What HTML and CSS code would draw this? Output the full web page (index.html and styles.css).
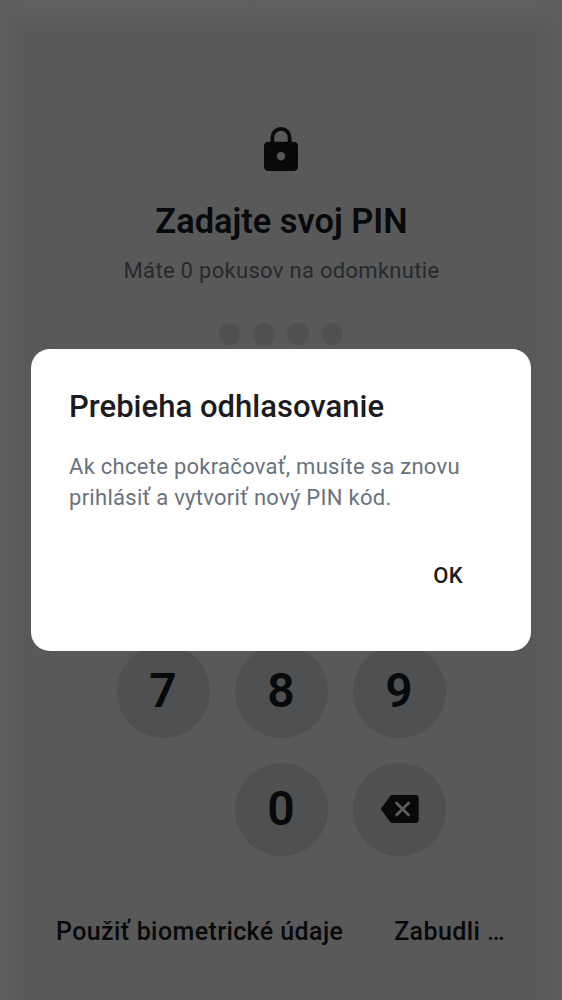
FILE: index.html
```html
<!DOCTYPE html>
<html lang="sk">
<head>
<meta charset="utf-8">
<title>PIN</title>
<link rel="stylesheet" href="styles.css">
</head>
<body>
<main class="screen">
  <header class="intro">
    <svg class="lock" viewBox="0 0 34 46" width="34" height="46">
      <path d="M8.400 18V11.400a8.600 8.600 0 0 1 17.200 0V18" fill="none" stroke="#08090b" stroke-width="3.800"/>
      <path fill="#08090b" fill-rule="evenodd" d="M4.200 15.700h25.600a4.200 4.200 0 0 1 4.200 4.200v20.800a4.200 4.200 0 0 1-4.200 4.200H4.200A4.200 4.200 0 0 1 0 40.700v-20.800a4.200 4.200 0 0 1 4.200-4.200zM17 26.100a4.200 4.200 0 1 0 0 8.400a4.200 4.200 0 1 0 0-8.400z"/>
    </svg>
    <h1 class="title">Zadajte svoj PIN</h1>
    <p class="attempts">Máte 0 pokusov na odomknutie</p>
    <div class="dots"><i class="dot"></i><i class="dot"></i><i class="dot"></i><i class="dot"></i></div>
  </header>
  <section class="keypad">
    <button class="key">7</button>
    <button class="key">8</button>
    <button class="key">9</button>
    <button class="key key-zero">0</button>
    <button class="key key-erase" aria-label="Vymazať">
      <svg class="erase" viewBox="0 0 38 28" width="38" height="28">
        <path fill="#08090b" d="M11.500 0H34.500a3.200 3.200 0 0 1 3.200 3.200V24.800a3.200 3.200 0 0 1-3.200 3.200H11.500a3 3 0 0 1-2.500-1.300L.5 15a1.800 1.800 0 0 1 0-2L9 1.300A3 3 0 0 1 11.500 0z"/>
        <path d="M14.800 7.200l13.600 13.600M28.400 7.200L14.800 20.800" stroke="#5a5b5d" stroke-width="2.900"/>
      </svg>
    </button>
  </section>
  <footer class="links">
    <span class="link biometric">Použiť biometrické údaje</span>
    <span class="link forgot">Zabudli …</span>
  </footer>
</main>
<section class="dialog" role="dialog">
  <h2 class="dialog-title">Prebieha odhlasovanie</h2>
  <p class="dialog-text">Ak chcete pokračovať, musíte sa znovu<br>prihlásiť a vytvoriť nový PIN kód.</p>
  <button class="ok">OK</button>
</section>
</body>
</html>
```
FILE: styles.css
```css
* { box-sizing: border-box; margin: 0; }
body {
  width: 562px;
  height: 1000px;
  overflow: hidden;
  font-family: Roboto, sans-serif;
  background: #595959;
}
button { border: 0; padding: 0; background: none; font-family: inherit; }
.screen {
  height: 1000px;
  display: flex;
  flex-direction: column;
  align-items: center;
  background:
    linear-gradient(to right, #5e5e5e, rgba(94, 94, 94, 0) 22px calc(100% - 22px), #5e5e5e),
    linear-gradient(to bottom, #606060, #595959 30px);
}
.intro {
  padding-top: 126px;
  display: flex;
  flex-direction: column;
  align-items: center;
}
.lock { display: block; }
.title {
  margin-top: 29px;
  padding-left: 1px;
  font-size: 34.400px;
  line-height: 40px;
  font-weight: 600;
  color: #08090b;
  white-space: nowrap;
}
.attempts {
  margin-top: 16px;
  padding-left: 1px;
  font-size: 22px;
  line-height: 28px;
  letter-spacing: 0.300px;
  color: #26292d;
  white-space: nowrap;
}
.dots { display: flex; gap: 12.800px; margin-top: 38.400px; }
.dot { width: 21.600px; height: 21.600px; border-radius: 50%; background: #4e5052; }
.keypad {
  margin-top: 299.600px;
  display: grid;
  grid-template-columns: repeat(3, 93px);
  grid-auto-rows: 93px;
  gap: 25px;
}
.key {
  display: flex;
  align-items: center;
  justify-content: center;
  padding-bottom: 2px;
  border-radius: 50%;
  background: #4e5052;
  font-size: 48px;
  font-weight: 600;
  color: #08090b;
}
.key-zero { grid-column: 2; }
.key-erase { padding: 0 0 0 2px; }
.links {
  width: 100%;
  margin-top: 60.500px;
  padding: 0 57px 0 56px;
  display: flex;
  justify-content: space-between;
}
.link {
  font-size: 25px;
  line-height: 32px;
  font-weight: 500;
  letter-spacing: 0.400px;
  color: #08090b;
  white-space: nowrap;
}
.dialog {
  position: absolute;
  left: 31px;
  top: 349px;
  width: 500px;
  height: 301.500px;
  padding: 38px 38px 0;
  display: flex;
  flex-direction: column;
  border-radius: 19px;
  background: #fff;
}
.dialog-title {
  font-size: 31px;
  line-height: 40px;
  font-weight: 500;
  letter-spacing: 0.030px;
  color: #1b1b21;
  white-space: nowrap;
}
.dialog-text {
  margin-top: 24px;
  font-size: 22px;
  line-height: 31px;
  letter-spacing: 0.280px;
  color: #69737d;
  white-space: nowrap;
}
.ok {
  align-self: flex-end;
  margin: 48px 30px 0 0;
  font-size: 22px;
  line-height: 30px;
  font-weight: 500;
  letter-spacing: 0.300px;
  color: #1b1b21;
}
```
